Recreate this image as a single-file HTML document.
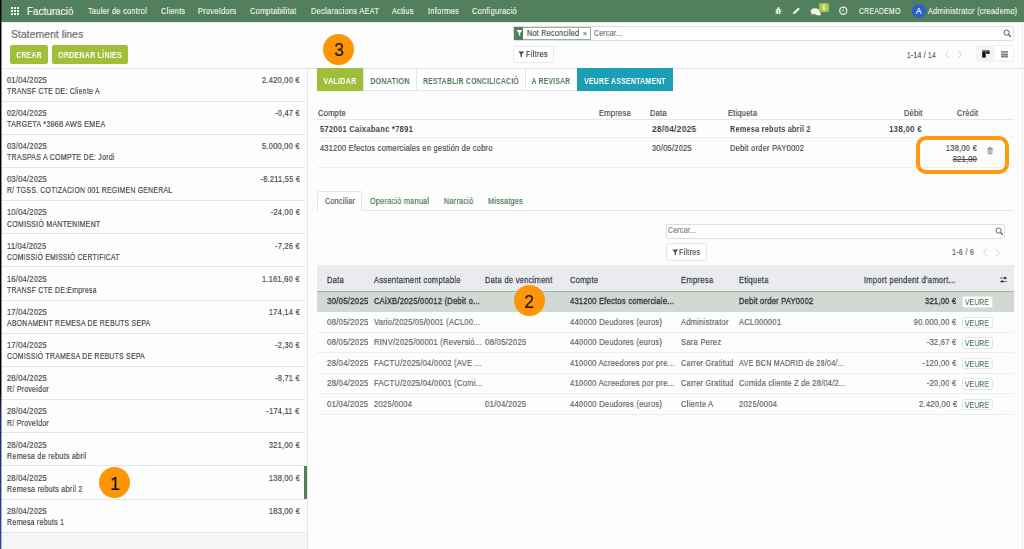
<!DOCTYPE html>
<html><head><meta charset="utf-8"><title>Statement lines</title>
<style>
html,body{margin:0;padding:0;width:1024px;height:549px;overflow:hidden;background:#fdfdfd;font-family:'Liberation Sans', sans-serif;}
.t{position:absolute;white-space:nowrap;line-height:normal;font-family:'Liberation Sans', sans-serif;will-change:transform;-webkit-text-stroke:0.2px currentColor;}
.r{position:absolute;}
</style></head><body>
<div class="r" style="left:0.00px;top:0.00px;width:1024.00px;height:22.00px;background:#53805c"></div>
<div class="r" style="left:0.00px;top:22.00px;width:1024.00px;height:1.00px;background:#e9efe9"></div>
<div class="r" style="left:11.00px;top:7.00px;width:2.20px;height:2.20px;background:#f2f5f2"></div>
<div class="r" style="left:11.00px;top:10.00px;width:2.20px;height:2.20px;background:#f2f5f2"></div>
<div class="r" style="left:11.00px;top:13.00px;width:2.20px;height:2.20px;background:#f2f5f2"></div>
<div class="r" style="left:14.00px;top:7.00px;width:2.20px;height:2.20px;background:#f2f5f2"></div>
<div class="r" style="left:14.00px;top:10.00px;width:2.20px;height:2.20px;background:#f2f5f2"></div>
<div class="r" style="left:14.00px;top:13.00px;width:2.20px;height:2.20px;background:#f2f5f2"></div>
<div class="r" style="left:17.00px;top:7.00px;width:2.20px;height:2.20px;background:#f2f5f2"></div>
<div class="r" style="left:17.00px;top:10.00px;width:2.20px;height:2.20px;background:#f2f5f2"></div>
<div class="r" style="left:17.00px;top:13.00px;width:2.20px;height:2.20px;background:#f2f5f2"></div>
<div class="t" style="left:27.30px;top:5.05px;font-size:10.8px;color:#f4f6f4;font-weight:normal;transform:scaleX(0.9223);transform-origin:left center;">Facturació</div>
<div class="t" style="left:88.00px;top:6.06px;font-size:8.64px;color:#eef2ee;font-weight:normal;letter-spacing:0.3px;transform:scaleX(0.8575);transform-origin:left center;">Tauler de control</div>
<div class="t" style="left:160.50px;top:6.06px;font-size:8.64px;color:#eef2ee;font-weight:normal;letter-spacing:0.3px;transform:scaleX(0.8577);transform-origin:left center;">Clients</div>
<div class="t" style="left:198.30px;top:6.06px;font-size:8.64px;color:#eef2ee;font-weight:normal;letter-spacing:0.3px;transform:scaleX(0.8639);transform-origin:left center;">Proveïdors</div>
<div class="t" style="left:249.80px;top:6.06px;font-size:8.64px;color:#eef2ee;font-weight:normal;letter-spacing:0.3px;transform:scaleX(0.8594);transform-origin:left center;">Comptabilitat</div>
<div class="t" style="left:311.30px;top:6.06px;font-size:8.64px;color:#eef2ee;font-weight:normal;letter-spacing:0.3px;transform:scaleX(0.8661);transform-origin:left center;">Declaracions AEAT</div>
<div class="t" style="left:391.70px;top:6.06px;font-size:8.64px;color:#eef2ee;font-weight:normal;letter-spacing:0.3px;transform:scaleX(0.8601);transform-origin:left center;">Actius</div>
<div class="t" style="left:427.50px;top:6.06px;font-size:8.64px;color:#eef2ee;font-weight:normal;letter-spacing:0.3px;transform:scaleX(0.8642);transform-origin:left center;">Informes</div>
<div class="t" style="left:472.40px;top:6.06px;font-size:8.64px;color:#eef2ee;font-weight:normal;letter-spacing:0.3px;transform:scaleX(0.8620);transform-origin:left center;">Configuració</div>
<div class="t" style="left:858.80px;top:6.20px;font-size:8.424px;color:#eef2ee;font-weight:normal;letter-spacing:0.3px;transform:scaleX(0.8164);transform-origin:left center;">CREADEMO</div>
<div class="r" style="left:912px;top:3.7px;width:14px;height:14px;border-radius:50%;background:#2f5fc8"></div>
<div class="t" style="left:718.90px;width:400px;text-align:center;top:5.86px;font-size:9.18px;color:#ffffff;font-weight:normal;letter-spacing:0.3px;transform:scaleX(0.8827);transform-origin:center center;">A</div>
<div class="t" style="left:927.80px;top:6.06px;font-size:8.64px;color:#eef2ee;font-weight:normal;letter-spacing:0.3px;transform:scaleX(0.8561);transform-origin:left center;">Administrator (creademo)</div>
<svg class="r" style="left:770px;top:4px" width="80" height="16" viewBox="0 0 80 16">
<g fill="#eef2ee">
<ellipse cx="8.4" cy="7.4" rx="2.3" ry="2.6"/><ellipse cx="8.4" cy="4.3" rx="1.3" ry="1.1"/>
<rect x="5.3" y="5.6" width="6.2" height="0.5"/><rect x="5.2" y="7.5" width="6.4" height="0.5"/><rect x="5.5" y="9.3" width="5.8" height="0.5"/>
</g><rect x="8.15" y="5.4" width="0.5" height="4.6" fill="#53805c"/><g>
</g>
<path d="M22.8 10.2 L23.5 8.2 L28.3 3.4 L29.8 4.9 L25 9.7 Z" fill="#eef2ee"/>
<path d="M45 4.3 c-2.6 0 -4.3 1.3 -4.3 3 c0 0.9 0.5 1.6 1.2 2.1 l-0.6 1.6 l2.1 -1 c0.5 0.1 1 0.2 1.6 0.2 c2.6 0 4.3 -1.3 4.3 -3 c0 -1.7 -1.7 -2.9 -4.3 -2.9z" fill="#eef2ee"/>
<path d="M48.5 7.3 c1.5 0.3 2.3 1.1 2.3 2.1 c0 0.5 -0.3 1 -0.7 1.3 l0.4 1.2 l-1.5 -0.7 c-0.3 0.1 -0.6 0.1 -0.9 0.1 c-1.2 0 -2.2 -0.4 -2.7 -1" fill="#eef2ee"/>
<circle cx="73.3" cy="6.7" r="3.6" fill="none" stroke="#eef2ee" stroke-width="1.2"/>
<path d="M73.3 4.8 V6.9 H71.9" fill="none" stroke="#eef2ee" stroke-width="0.9"/>
</svg>
<div class="r" style="left:819.2px;top:3.2px;width:9.7px;height:9.3px;border-radius:2px;background:#aac74c"></div>
<div class="t" style="left:624.10px;width:400px;text-align:center;top:4.07px;font-size:7.02px;color:#f4f8ea;font-weight:normal;letter-spacing:0.3px;transform:scaleX(0.8598);transform-origin:center center;">6</div>
<div class="t" style="left:10.60px;top:27.75px;font-size:11.34px;color:#666a6e;font-weight:normal;transform:scaleX(0.9259);transform-origin:left center;">Statement lines</div>
<div class="r" style="left:10.30px;top:45.00px;width:37.70px;height:19.00px;background:#a1be3a;border-radius:2px"></div>
<div class="t" style="left:-170.60px;width:400px;text-align:center;top:49.98px;font-size:8.532px;color:#ffffff;font-weight:bold;letter-spacing:0.3px;transform:scaleX(0.8009);transform-origin:center center;-webkit-text-stroke:0;">CREAR</div>
<div class="r" style="left:52.00px;top:45.00px;width:76.00px;height:19.00px;background:#a1be3a;border-radius:2px"></div>
<div class="t" style="left:-110.10px;width:400px;text-align:center;top:49.98px;font-size:8.532px;color:#ffffff;font-weight:bold;letter-spacing:0.3px;transform:scaleX(0.8290);transform-origin:center center;-webkit-text-stroke:0;">ORDENAR LÍNIES</div>
<div class="r" style="left:512.60px;top:26.20px;width:501.10px;height:15.10px;border:1px solid #dcdfe2;border-radius:2px;box-sizing:border-box;background:#fff"></div>
<div class="r" style="left:513.90px;top:27.00px;width:77.10px;height:12.60px;border:1px solid #93b399;box-sizing:border-box;background:#fff"></div>
<div class="r" style="left:513.90px;top:27.00px;width:9.50px;height:12.60px;background:#53805c"></div>
<svg class="r" style="left:515.5px;top:29px" width="7" height="8" viewBox="0 0 7 8"><path d="M0.5 1 H6.5 L4.2 4 V7 L2.8 6 V4 Z" fill="#fff"/></svg>
<div class="t" style="left:526.80px;top:29.34px;font-size:8.208px;color:#4a4f55;font-weight:normal;letter-spacing:0.3px;transform:scaleX(0.8771);transform-origin:left center;">Not Reconciled</div>
<div class="t" style="left:385.30px;width:400px;text-align:center;top:29.46px;font-size:8.1px;color:#666;font-weight:normal;letter-spacing:0.3px;transform:scaleX(0.8707);transform-origin:center center;">×</div>
<div class="t" style="left:593.90px;top:29.04px;font-size:8.208px;color:#6f7377;font-weight:normal;letter-spacing:0.3px;transform:scaleX(0.8518);transform-origin:left center;">Cercar...</div>
<svg class="r" style="left:1003px;top:29px" width="9" height="9" viewBox="0 0 9 9"><circle cx="3.6" cy="3.6" r="2.6" fill="none" stroke="#4a4f55" stroke-width="0.9"/><path d="M5.5 5.5 L7.8 7.8" stroke="#4a4f55" stroke-width="1.1"/></svg>
<div class="r" style="left:512.60px;top:45.50px;width:41.00px;height:17.10px;border:1px solid #e6e8ea;border-radius:2px;box-sizing:border-box;background:#fff"></div>
<svg class="r" style="left:518px;top:51.3px" width="7" height="7" viewBox="0 0 7 7"><path d="M0.3 0.5 H6.2 L4 3.2 V6.5 L2.5 5.6 V3.2 Z" fill="#4a4f55"/></svg>
<div class="t" style="left:526.10px;top:49.30px;font-size:8.424px;color:#3f4449;font-weight:normal;letter-spacing:0.3px;transform:scaleX(0.8749);transform-origin:left center;">Filtres</div>
<div class="t" style="left:907.30px;top:49.50px;font-size:8.424px;color:#555a5e;font-weight:normal;letter-spacing:0.3px;transform:scaleX(0.8067);transform-origin:left center;">1-14 / 14</div>
<svg class="r" style="left:944px;top:50px" width="20" height="9" viewBox="0 0 20 9"><path d="M5 0.8 L1.5 4.5 L5 8.2" fill="none" stroke="#c8cbce" stroke-width="0.9"/><path d="M14 0.8 L17.5 4.5 L14 8.2" fill="none" stroke="#c8cbce" stroke-width="0.9"/></svg>
<div class="r" style="left:976.30px;top:45.40px;width:37.50px;height:17.00px;border:1px solid #eceef0;border-radius:2px;box-sizing:border-box;background:#fff"></div>
<div class="r" style="left:976.30px;top:45.40px;width:18.70px;height:17.00px;background:#f3f4f5"></div>
<svg class="r" style="left:982px;top:50px" width="8" height="8" viewBox="0 0 8 8"><rect x="0.2" y="0.2" width="7.4" height="1.3" fill="#555"/><rect x="0.2" y="1.5" width="3.5" height="6.1" fill="#111"/><rect x="4.3" y="1.4" width="3.3" height="2.4" fill="#111"/></svg>
<svg class="r" style="left:1001px;top:50.5px" width="8" height="8" viewBox="0 0 8 8"><rect x="0" y="0.3" width="7" height="1.2" fill="#55595d"/><rect x="0" y="2.5" width="7" height="1.9" fill="#7d8185"/><rect x="0" y="4.6" width="7" height="1.9" fill="#7d8185"/></svg>
<div class="r" style="left:0.00px;top:67.90px;width:1024.00px;height:1.00px;background:#e3e6e9"></div>
<div class="r" style="left:1.00px;top:532.78px;width:306.00px;height:16.22px;background:#f4f5f5"></div>
<div class="r" style="left:1.00px;top:100.57px;width:304.00px;height:1.00px;background:#e3e6e9"></div>
<div class="t" style="left:6.80px;top:74.66px;font-size:8.64px;color:#45494d;font-weight:normal;letter-spacing:0.3px;transform:scaleX(0.8659);transform-origin:left center;">01/04/2025</div>
<div class="t" style="left:7.00px;top:85.96px;font-size:8.64px;color:#45494d;font-weight:normal;letter-spacing:0.3px;transform:scaleX(0.8071);transform-origin:left center;">TRANSF CTE DE: Cliente A</div>
<div class="t" style="right:724.00px;top:74.66px;font-size:8.64px;color:#45494d;font-weight:normal;letter-spacing:0.3px;transform:scaleX(0.8626);transform-origin:right center;">2.420,00 €</div>
<div class="r" style="left:1.00px;top:133.74px;width:304.00px;height:1.00px;background:#e3e6e9"></div>
<div class="t" style="left:6.80px;top:107.83px;font-size:8.64px;color:#45494d;font-weight:normal;letter-spacing:0.3px;transform:scaleX(0.8659);transform-origin:left center;">02/04/2025</div>
<div class="t" style="left:7.00px;top:119.13px;font-size:8.64px;color:#45494d;font-weight:normal;letter-spacing:0.3px;transform:scaleX(0.8308);transform-origin:left center;">TARGETA *3968 AWS EMEA</div>
<div class="t" style="right:724.00px;top:107.83px;font-size:8.64px;color:#45494d;font-weight:normal;letter-spacing:0.3px;transform:scaleX(0.8589);transform-origin:right center;">-0,47 €</div>
<div class="r" style="left:1.00px;top:166.91px;width:304.00px;height:1.00px;background:#e3e6e9"></div>
<div class="t" style="left:6.80px;top:141.00px;font-size:8.64px;color:#45494d;font-weight:normal;letter-spacing:0.3px;transform:scaleX(0.8659);transform-origin:left center;">03/04/2025</div>
<div class="t" style="left:7.00px;top:152.30px;font-size:8.64px;color:#45494d;font-weight:normal;letter-spacing:0.3px;transform:scaleX(0.8182);transform-origin:left center;">TRASPAS A COMPTE DE: Jordi</div>
<div class="t" style="right:724.00px;top:141.00px;font-size:8.64px;color:#45494d;font-weight:normal;letter-spacing:0.3px;transform:scaleX(0.8626);transform-origin:right center;">5.000,00 €</div>
<div class="r" style="left:1.00px;top:200.08px;width:304.00px;height:1.00px;background:#e3e6e9"></div>
<div class="t" style="left:6.80px;top:174.17px;font-size:8.64px;color:#45494d;font-weight:normal;letter-spacing:0.3px;transform:scaleX(0.8659);transform-origin:left center;">03/04/2025</div>
<div class="t" style="left:7.00px;top:185.47px;font-size:8.64px;color:#45494d;font-weight:normal;letter-spacing:0.3px;transform:scaleX(0.7984);transform-origin:left center;">R/ TGSS. COTIZACION 001 REGIMEN GENERAL</div>
<div class="t" style="right:724.00px;top:174.17px;font-size:8.64px;color:#45494d;font-weight:normal;letter-spacing:0.3px;transform:scaleX(0.8600);transform-origin:right center;">-8.211,55 €</div>
<div class="r" style="left:1.00px;top:233.25px;width:304.00px;height:1.00px;background:#e3e6e9"></div>
<div class="t" style="left:6.80px;top:207.34px;font-size:8.64px;color:#45494d;font-weight:normal;letter-spacing:0.3px;transform:scaleX(0.8659);transform-origin:left center;">10/04/2025</div>
<div class="t" style="left:7.00px;top:218.64px;font-size:8.64px;color:#45494d;font-weight:normal;letter-spacing:0.3px;transform:scaleX(0.8142);transform-origin:left center;">COMISSIÓ MANTENIMENT</div>
<div class="t" style="right:724.00px;top:207.34px;font-size:8.64px;color:#45494d;font-weight:normal;letter-spacing:0.3px;transform:scaleX(0.8608);transform-origin:right center;">-24,00 €</div>
<div class="r" style="left:1.00px;top:266.42px;width:304.00px;height:1.00px;background:#e3e6e9"></div>
<div class="t" style="left:6.80px;top:240.51px;font-size:8.64px;color:#45494d;font-weight:normal;letter-spacing:0.3px;transform:scaleX(0.8650);transform-origin:left center;">11/04/2025</div>
<div class="t" style="left:7.00px;top:251.81px;font-size:8.64px;color:#45494d;font-weight:normal;letter-spacing:0.3px;transform:scaleX(0.7933);transform-origin:left center;">COMISSIÓ EMISSIÓ CERTIFICAT</div>
<div class="t" style="right:724.00px;top:240.51px;font-size:8.64px;color:#45494d;font-weight:normal;letter-spacing:0.3px;transform:scaleX(0.8589);transform-origin:right center;">-7,26 €</div>
<div class="r" style="left:1.00px;top:299.59px;width:304.00px;height:1.00px;background:#e3e6e9"></div>
<div class="t" style="left:6.80px;top:273.68px;font-size:8.64px;color:#45494d;font-weight:normal;letter-spacing:0.3px;transform:scaleX(0.8659);transform-origin:left center;">16/04/2025</div>
<div class="t" style="left:7.00px;top:284.98px;font-size:8.64px;color:#45494d;font-weight:normal;letter-spacing:0.3px;transform:scaleX(0.8033);transform-origin:left center;">TRANSF CTE DE:Empresa</div>
<div class="t" style="right:724.00px;top:273.68px;font-size:8.64px;color:#45494d;font-weight:normal;letter-spacing:0.3px;transform:scaleX(0.8626);transform-origin:right center;">1.161,60 €</div>
<div class="r" style="left:1.00px;top:332.76px;width:304.00px;height:1.00px;background:#e3e6e9"></div>
<div class="t" style="left:6.80px;top:306.85px;font-size:8.64px;color:#45494d;font-weight:normal;letter-spacing:0.3px;transform:scaleX(0.8659);transform-origin:left center;">17/04/2025</div>
<div class="t" style="left:7.00px;top:318.15px;font-size:8.64px;color:#45494d;font-weight:normal;letter-spacing:0.3px;transform:scaleX(0.8036);transform-origin:left center;">ABONAMENT REMESA DE REBUTS SEPA</div>
<div class="t" style="right:724.00px;top:306.85px;font-size:8.64px;color:#45494d;font-weight:normal;letter-spacing:0.3px;transform:scaleX(0.8642);transform-origin:right center;">174,14 €</div>
<div class="r" style="left:1.00px;top:365.93px;width:304.00px;height:1.00px;background:#e3e6e9"></div>
<div class="t" style="left:6.80px;top:340.02px;font-size:8.64px;color:#45494d;font-weight:normal;letter-spacing:0.3px;transform:scaleX(0.8659);transform-origin:left center;">17/04/2025</div>
<div class="t" style="left:7.00px;top:351.32px;font-size:8.64px;color:#45494d;font-weight:normal;letter-spacing:0.3px;transform:scaleX(0.8002);transform-origin:left center;">COMISSIÓ TRAMESA DE REBUTS SEPA</div>
<div class="t" style="right:724.00px;top:340.02px;font-size:8.64px;color:#45494d;font-weight:normal;letter-spacing:0.3px;transform:scaleX(0.8589);transform-origin:right center;">-2,30 €</div>
<div class="r" style="left:1.00px;top:399.10px;width:304.00px;height:1.00px;background:#e3e6e9"></div>
<div class="t" style="left:6.80px;top:373.19px;font-size:8.64px;color:#45494d;font-weight:normal;letter-spacing:0.3px;transform:scaleX(0.8659);transform-origin:left center;">28/04/2025</div>
<div class="t" style="left:7.00px;top:384.49px;font-size:8.64px;color:#45494d;font-weight:normal;letter-spacing:0.3px;transform:scaleX(0.8156);transform-origin:left center;">R/ Proveidor</div>
<div class="t" style="right:724.00px;top:373.19px;font-size:8.64px;color:#45494d;font-weight:normal;letter-spacing:0.3px;transform:scaleX(0.8589);transform-origin:right center;">-8,71 €</div>
<div class="r" style="left:1.00px;top:432.27px;width:304.00px;height:1.00px;background:#e3e6e9"></div>
<div class="t" style="left:6.80px;top:406.36px;font-size:8.64px;color:#45494d;font-weight:normal;letter-spacing:0.3px;transform:scaleX(0.8659);transform-origin:left center;">28/04/2025</div>
<div class="t" style="left:7.00px;top:417.66px;font-size:8.64px;color:#45494d;font-weight:normal;letter-spacing:0.3px;transform:scaleX(0.8081);transform-origin:left center;">R/ Proveïdor</div>
<div class="t" style="right:724.00px;top:406.36px;font-size:8.64px;color:#45494d;font-weight:normal;letter-spacing:0.3px;transform:scaleX(0.8611);transform-origin:right center;">-174,11 €</div>
<div class="r" style="left:1.00px;top:465.44px;width:304.00px;height:1.00px;background:#e3e6e9"></div>
<div class="t" style="left:6.80px;top:439.53px;font-size:8.64px;color:#45494d;font-weight:normal;letter-spacing:0.3px;transform:scaleX(0.8659);transform-origin:left center;">28/04/2025</div>
<div class="t" style="left:7.00px;top:450.83px;font-size:8.64px;color:#45494d;font-weight:normal;letter-spacing:0.3px;transform:scaleX(0.8330);transform-origin:left center;">Remesa de rebuts abril</div>
<div class="t" style="right:724.00px;top:439.53px;font-size:8.64px;color:#45494d;font-weight:normal;letter-spacing:0.3px;transform:scaleX(0.8642);transform-origin:right center;">321,00 €</div>
<div class="r" style="left:1.00px;top:498.61px;width:304.00px;height:1.00px;background:#e3e6e9"></div>
<div class="t" style="left:6.80px;top:472.70px;font-size:8.64px;color:#45494d;font-weight:normal;letter-spacing:0.3px;transform:scaleX(0.8659);transform-origin:left center;">28/04/2025</div>
<div class="t" style="left:7.00px;top:484.00px;font-size:8.64px;color:#45494d;font-weight:normal;letter-spacing:0.3px;transform:scaleX(0.8347);transform-origin:left center;">Remesa rebuts abril 2</div>
<div class="t" style="right:724.00px;top:472.70px;font-size:8.64px;color:#45494d;font-weight:normal;letter-spacing:0.3px;transform:scaleX(0.8642);transform-origin:right center;">138,00 €</div>
<div class="r" style="left:304.30px;top:466.44px;width:2.70px;height:32.67px;background:#53805c"></div>
<div class="r" style="left:1.00px;top:531.78px;width:304.00px;height:1.00px;background:#e3e6e9"></div>
<div class="t" style="left:6.80px;top:505.87px;font-size:8.64px;color:#45494d;font-weight:normal;letter-spacing:0.3px;transform:scaleX(0.8659);transform-origin:left center;">28/04/2025</div>
<div class="t" style="left:7.00px;top:517.17px;font-size:8.64px;color:#45494d;font-weight:normal;letter-spacing:0.3px;transform:scaleX(0.8167);transform-origin:left center;">Remesa rebuts 1</div>
<div class="t" style="right:724.00px;top:505.87px;font-size:8.64px;color:#45494d;font-weight:normal;letter-spacing:0.3px;transform:scaleX(0.8642);transform-origin:right center;">183,00 €</div>
<div class="r" style="left:307.00px;top:68.90px;width:1.00px;height:480.10px;background:#e3e6e9"></div>
<div class="r" style="left:316.90px;top:68.40px;width:46.40px;height:23.10px;background:#a1be3a"></div>
<div class="t" style="left:140.40px;width:400px;text-align:center;top:76.18px;font-size:8.532px;color:#ffffff;font-weight:bold;letter-spacing:0.3px;transform:scaleX(0.8379);transform-origin:center center;-webkit-text-stroke:0;">VALIDAR</div>
<div class="r" style="left:363.30px;top:68.40px;width:53.50px;height:23.10px;border:1px solid #e3e6e9;box-sizing:border-box;background:#fff"></div>
<div class="t" style="left:189.65px;width:400px;text-align:center;top:76.18px;font-size:8.532px;color:#4e7a57;font-weight:bold;letter-spacing:0.3px;transform:scaleX(0.8378);transform-origin:center center;-webkit-text-stroke:0;">DONATION</div>
<div class="r" style="left:416.00px;top:68.40px;width:109.80px;height:23.10px;border:1px solid #e3e6e9;box-sizing:border-box;background:#fff"></div>
<div class="t" style="left:270.50px;width:400px;text-align:center;top:76.18px;font-size:8.532px;color:#4e7a57;font-weight:bold;letter-spacing:0.3px;transform:scaleX(0.8027);transform-origin:center center;-webkit-text-stroke:0;">RESTABLIR CONCILICACIÓ</div>
<div class="r" style="left:525.00px;top:68.40px;width:53.10px;height:23.10px;border:1px solid #e3e6e9;box-sizing:border-box;background:#fff"></div>
<div class="t" style="left:351.15px;width:400px;text-align:center;top:76.18px;font-size:8.532px;color:#4e7a57;font-weight:bold;letter-spacing:0.3px;transform:scaleX(0.7903);transform-origin:center center;-webkit-text-stroke:0;">A REVISAR</div>
<div class="r" style="left:577.30px;top:68.40px;width:95.70px;height:23.10px;background:#1b9fb4"></div>
<div class="t" style="left:425.10px;width:400px;text-align:center;top:76.18px;font-size:8.532px;color:#ffffff;font-weight:bold;letter-spacing:0.3px;transform:scaleX(0.8120);transform-origin:center center;-webkit-text-stroke:0;">VEURE ASSENTAMENT</div>
<div class="t" style="left:317.80px;top:107.76px;font-size:8.64px;color:#45494d;font-weight:normal;letter-spacing:0.3px;transform:scaleX(0.8739);transform-origin:left center;">Compte</div>
<div class="t" style="left:598.50px;top:107.76px;font-size:8.64px;color:#45494d;font-weight:normal;letter-spacing:0.3px;transform:scaleX(0.8729);transform-origin:left center;">Empresa</div>
<div class="t" style="left:650.00px;top:107.76px;font-size:8.64px;color:#45494d;font-weight:normal;letter-spacing:0.3px;transform:scaleX(0.8688);transform-origin:left center;">Data</div>
<div class="t" style="left:728.40px;top:107.76px;font-size:8.64px;color:#45494d;font-weight:normal;letter-spacing:0.3px;transform:scaleX(0.8608);transform-origin:left center;">Etiqueta</div>
<div class="t" style="right:101.00px;top:107.76px;font-size:8.64px;color:#45494d;font-weight:normal;letter-spacing:0.3px;transform:scaleX(0.8618);transform-origin:right center;">Dèbit</div>
<div class="t" style="left:957.00px;top:107.76px;font-size:8.64px;color:#45494d;font-weight:normal;letter-spacing:0.3px;transform:scaleX(0.8588);transform-origin:left center;">Crèdit</div>
<div class="r" style="left:317.00px;top:118.50px;width:697.00px;height:1.00px;background:#e3e6e9"></div>
<div class="t" style="left:319.70px;top:124.16px;font-size:8.64px;color:#3a3f44;font-weight:bold;letter-spacing:0.3px;transform:scaleX(0.8800);transform-origin:left center;-webkit-text-stroke:0;">572001 Caixabanc *7891</div>
<div class="t" style="left:651.90px;top:124.16px;font-size:8.64px;color:#3a3f44;font-weight:bold;letter-spacing:0.3px;transform:scaleX(0.9624);transform-origin:left center;-webkit-text-stroke:0;">28/04/2025</div>
<div class="t" style="left:729.80px;top:124.16px;font-size:8.64px;color:#3a3f44;font-weight:bold;letter-spacing:0.3px;transform:scaleX(0.8429);transform-origin:left center;-webkit-text-stroke:0;">Remesa rebuts abril 2</div>
<div class="t" style="right:102.30px;top:124.16px;font-size:8.64px;color:#3a3f44;font-weight:bold;letter-spacing:0.3px;transform:scaleX(0.9159);transform-origin:right center;-webkit-text-stroke:0;">138,00 €</div>
<div class="r" style="left:317.00px;top:137.00px;width:697.00px;height:1.00px;background:#eef0f2"></div>
<div class="t" style="left:319.50px;top:142.86px;font-size:8.64px;color:#45494d;font-weight:normal;letter-spacing:0.3px;transform:scaleX(0.8622);transform-origin:left center;">431200 Efectos comerciales en gestión de cobro</div>
<div class="t" style="left:651.90px;top:142.86px;font-size:8.64px;color:#45494d;font-weight:normal;letter-spacing:0.3px;transform:scaleX(0.8659);transform-origin:left center;">30/05/2025</div>
<div class="t" style="left:729.80px;top:142.86px;font-size:8.64px;color:#45494d;font-weight:normal;letter-spacing:0.3px;transform:scaleX(0.8646);transform-origin:left center;">Debit order PAY0002</div>
<div class="t" style="right:46.70px;top:142.86px;font-size:8.64px;color:#45494d;font-weight:normal;letter-spacing:0.3px;transform:scaleX(0.8642);transform-origin:right center;">138,00 €</div>
<div class="t" style="right:46.70px;top:154.36px;font-size:8.64px;color:#45494d;font-weight:normal;text-decoration:line-through;letter-spacing:0.3px;transform:scaleX(0.8669);transform-origin:right center;">321,00</div>
<svg class="r" style="left:987.3px;top:147.2px" width="7" height="8" viewBox="0 0 7 8"><rect x="0.2" y="1.1" width="5.8" height="0.7" fill="#6a6e72"/><rect x="2.1" y="0.2" width="2" height="0.9" fill="#6a6e72"/><path d="M1.1 2.3 H5.1 L4.8 6.8 H1.4 Z" fill="none" stroke="#6a6e72" stroke-width="0.7"/><rect x="2.4" y="3" width="0.5" height="3" fill="#6a6e72"/><rect x="3.4" y="3" width="0.5" height="3" fill="#6a6e72"/></svg>
<div class="r" style="left:317.00px;top:167.00px;width:697.00px;height:1.00px;background:#eef0f2"></div>
<div class="r" style="left:916.4px;top:135.6px;width:92.6px;height:38.9px;border:4px solid #fd9a0e;border-radius:10px;box-sizing:border-box"></div>
<div class="r" style="left:317.00px;top:210.00px;width:697.00px;height:1.00px;background:#e3e6e9"></div>
<div class="r" style="left:317.2px;top:191.2px;width:45.2px;height:19.8px;border:1px solid #e3e6e9;border-bottom:none;border-radius:2px 2px 0 0;box-sizing:border-box;background:#fff"></div>
<div class="t" style="left:325.00px;top:196.00px;font-size:8.424px;color:#555a5e;font-weight:normal;letter-spacing:0.3px;transform:scaleX(0.8554);transform-origin:left center;">Conciliar</div>
<div class="t" style="left:370.00px;top:196.00px;font-size:8.424px;color:#4e7a57;font-weight:normal;letter-spacing:0.3px;transform:scaleX(0.8652);transform-origin:left center;">Operació manual</div>
<div class="t" style="left:444.30px;top:196.00px;font-size:8.424px;color:#4e7a57;font-weight:normal;letter-spacing:0.3px;transform:scaleX(0.8610);transform-origin:left center;">Narració</div>
<div class="t" style="left:488.40px;top:196.00px;font-size:8.424px;color:#4e7a57;font-weight:normal;letter-spacing:0.3px;transform:scaleX(0.8644);transform-origin:left center;">Missatges</div>
<div class="r" style="left:665.50px;top:223.50px;width:339.00px;height:15.20px;border:1px solid #dcdfe2;border-radius:2px;box-sizing:border-box;background:#fff"></div>
<div class="t" style="left:667.70px;top:225.94px;font-size:8.208px;color:#7a7e82;font-weight:normal;letter-spacing:0.3px;transform:scaleX(0.8518);transform-origin:left center;">Cercar...</div>
<svg class="r" style="left:995px;top:226.6px" width="9" height="9" viewBox="0 0 9 9"><circle cx="3.6" cy="3.6" r="2.6" fill="none" stroke="#4a4f55" stroke-width="0.9"/><path d="M5.5 5.5 L7.8 7.8" stroke="#4a4f55" stroke-width="1.1"/></svg>
<div class="r" style="left:665.50px;top:243.00px;width:41.30px;height:17.50px;border:1px solid #e6e8ea;border-radius:2px;box-sizing:border-box;background:#fff"></div>
<svg class="r" style="left:671.5px;top:249px" width="7" height="7" viewBox="0 0 7 7"><path d="M0.3 0.5 H6.2 L4 3.2 V6.5 L2.5 5.6 V3.2 Z" fill="#4a4f55"/></svg>
<div class="t" style="left:679.40px;top:247.40px;font-size:8.424px;color:#4a4f55;font-weight:normal;letter-spacing:0.3px;transform:scaleX(0.8482);transform-origin:left center;">Filtres</div>
<div class="t" style="left:951.80px;top:247.40px;font-size:8.424px;color:#555a5e;font-weight:normal;letter-spacing:0.3px;transform:scaleX(0.8511);transform-origin:left center;">1-6 / 6</div>
<svg class="r" style="left:982px;top:248px" width="20" height="9" viewBox="0 0 20 9"><path d="M5 0.8 L1.5 4.5 L5 8.2" fill="none" stroke="#c8cbce" stroke-width="0.9"/><path d="M14 0.8 L17.5 4.5 L14 8.2" fill="none" stroke="#c8cbce" stroke-width="0.9"/></svg>
<div class="r" style="left:317.00px;top:265.20px;width:697.00px;height:26.10px;background:#e9ebef"></div>
<div class="r" style="left:317.00px;top:290.70px;width:697.00px;height:1.20px;background:#9bb7a0"></div>
<div class="t" style="left:326.70px;top:274.54px;font-size:8.748px;color:#3f444a;font-weight:normal;-webkit-text-stroke:0.28px #3f444a;letter-spacing:0.3px;transform:scaleX(0.8695);transform-origin:left center;">Data</div>
<div class="t" style="left:373.60px;top:274.54px;font-size:8.748px;color:#3f444a;font-weight:normal;-webkit-text-stroke:0.28px #3f444a;letter-spacing:0.3px;transform:scaleX(0.8677);transform-origin:left center;">Assentament comptable</div>
<div class="t" style="left:484.70px;top:274.54px;font-size:8.748px;color:#3f444a;font-weight:normal;-webkit-text-stroke:0.28px #3f444a;letter-spacing:0.3px;transform:scaleX(0.8654);transform-origin:left center;">Data de venciment</div>
<div class="t" style="left:570.00px;top:274.54px;font-size:8.748px;color:#3f444a;font-weight:normal;-webkit-text-stroke:0.28px #3f444a;letter-spacing:0.3px;transform:scaleX(0.8745);transform-origin:left center;">Compte</div>
<div class="t" style="left:681.30px;top:274.54px;font-size:8.748px;color:#3f444a;font-weight:normal;-webkit-text-stroke:0.28px #3f444a;letter-spacing:0.3px;transform:scaleX(0.8735);transform-origin:left center;">Empresa</div>
<div class="t" style="left:739.00px;top:274.54px;font-size:8.748px;color:#3f444a;font-weight:normal;-webkit-text-stroke:0.28px #3f444a;letter-spacing:0.3px;transform:scaleX(0.8615);transform-origin:left center;">Etiqueta</div>
<div class="t" style="right:68.10px;top:274.51px;font-size:8.921px;color:#3f444a;font-weight:normal;-webkit-text-stroke:0.28px #3f444a;letter-spacing:0.3px;transform:scaleX(0.8610);transform-origin:right center;">Import pendent d'amort...</div>
<svg class="r" style="left:998.5px;top:275.5px" width="9" height="8" viewBox="0 0 9 8"><rect x="0.8" y="1.7" width="7.2" height="0.7" fill="#3a3e42"/><rect x="0.8" y="5.2" width="7.2" height="0.7" fill="#3a3e42"/><circle cx="6" cy="2.05" r="1.2" fill="#3a3e42"/><circle cx="3.2" cy="5.55" r="1.2" fill="#3a3e42"/></svg>
<div class="r" style="left:317.00px;top:291.80px;width:697.00px;height:20.00px;background:#d2d9d3"></div>
<div class="t" style="left:326.70px;top:296.44px;font-size:8.748px;color:#2f3337;font-weight:normal;-webkit-text-stroke:0.35px #2f3337;letter-spacing:0.3px;transform:scaleX(0.8914);transform-origin:left center;">30/05/2025</div>
<div class="t" style="left:373.60px;top:296.44px;font-size:8.748px;color:#2f3337;font-weight:normal;-webkit-text-stroke:0.35px #2f3337;letter-spacing:0.3px;transform:scaleX(0.8628);transform-origin:left center;">CAiXB/2025/00012 (Debit o...</div>
<div class="t" style="left:570.00px;top:296.44px;font-size:8.748px;color:#2f3337;font-weight:normal;-webkit-text-stroke:0.35px #2f3337;letter-spacing:0.3px;transform:scaleX(0.8618);transform-origin:left center;">431200 Efectos comerciale...</div>
<div class="t" style="left:739.00px;top:296.44px;font-size:8.748px;color:#2f3337;font-weight:normal;-webkit-text-stroke:0.35px #2f3337;letter-spacing:0.3px;transform:scaleX(0.8557);transform-origin:left center;">Debit order PAY0002</div>
<div class="t" style="right:67.20px;top:296.44px;font-size:8.748px;color:#2f3337;font-weight:normal;-webkit-text-stroke:0.35px #2f3337;letter-spacing:0.3px;transform:scaleX(0.8650);transform-origin:right center;">321,00 €</div>
<div class="r" style="left:961.80px;top:296.00px;width:30.90px;height:11.60px;border:1px solid #e3e6e9;border-radius:2px;box-sizing:border-box;background:#fff"></div>
<div class="t" style="left:777.20px;width:400px;text-align:center;top:297.42px;font-size:8.856px;color:#4e7a57;font-weight:normal;letter-spacing:0.3px;transform:scaleX(0.7622);transform-origin:center center;">VEURE</div>
<div class="r" style="left:317.00px;top:331.80px;width:697.00px;height:1.00px;background:#eceef0"></div>
<div class="t" style="left:326.70px;top:316.94px;font-size:8.748px;color:#5f6368;font-weight:normal;letter-spacing:0.3px;transform:scaleX(0.8914);transform-origin:left center;">08/05/2025</div>
<div class="t" style="left:373.60px;top:316.94px;font-size:8.748px;color:#5f6368;font-weight:normal;letter-spacing:0.3px;transform:scaleX(0.8629);transform-origin:left center;">Vario/2025/05/0001 (ACL00...</div>
<div class="t" style="left:570.00px;top:316.94px;font-size:8.748px;color:#5f6368;font-weight:normal;letter-spacing:0.3px;transform:scaleX(0.8660);transform-origin:left center;">440000 Deudores (euros)</div>
<div class="t" style="left:681.30px;top:316.94px;font-size:8.748px;color:#5f6368;font-weight:normal;letter-spacing:0.3px;transform:scaleX(0.8624);transform-origin:left center;">Administrator</div>
<div class="t" style="left:739.00px;top:316.94px;font-size:8.748px;color:#5f6368;font-weight:normal;letter-spacing:0.3px;transform:scaleX(0.8670);transform-origin:left center;">ACL000001</div>
<div class="t" style="right:67.20px;top:316.94px;font-size:8.748px;color:#5f6368;font-weight:normal;letter-spacing:0.3px;transform:scaleX(0.8642);transform-origin:right center;">90.000,00 €</div>
<div class="r" style="left:961.80px;top:316.50px;width:30.90px;height:11.60px;border:1px solid #e3e6e9;border-radius:2px;box-sizing:border-box;background:#fff"></div>
<div class="t" style="left:777.20px;width:400px;text-align:center;top:317.92px;font-size:8.856px;color:#4e7a57;font-weight:normal;letter-spacing:0.3px;transform:scaleX(0.7622);transform-origin:center center;">VEURE</div>
<div class="r" style="left:317.00px;top:352.30px;width:697.00px;height:1.00px;background:#eceef0"></div>
<div class="t" style="left:326.70px;top:337.44px;font-size:8.748px;color:#5f6368;font-weight:normal;letter-spacing:0.3px;transform:scaleX(0.8914);transform-origin:left center;">08/05/2025</div>
<div class="t" style="left:373.60px;top:337.44px;font-size:8.748px;color:#5f6368;font-weight:normal;letter-spacing:0.3px;transform:scaleX(0.8638);transform-origin:left center;">RINV/2025/00001 (Reversió...</div>
<div class="t" style="left:484.70px;top:337.44px;font-size:8.748px;color:#5f6368;font-weight:normal;letter-spacing:0.3px;transform:scaleX(0.8914);transform-origin:left center;">08/05/2025</div>
<div class="t" style="left:570.00px;top:337.44px;font-size:8.748px;color:#5f6368;font-weight:normal;letter-spacing:0.3px;transform:scaleX(0.8660);transform-origin:left center;">440000 Deudores (euros)</div>
<div class="t" style="left:681.30px;top:337.44px;font-size:8.748px;color:#5f6368;font-weight:normal;letter-spacing:0.3px;transform:scaleX(0.8665);transform-origin:left center;">Sara Perez</div>
<div class="t" style="right:67.20px;top:337.44px;font-size:8.748px;color:#5f6368;font-weight:normal;letter-spacing:0.3px;transform:scaleX(0.8615);transform-origin:right center;">-32,67 €</div>
<div class="r" style="left:961.80px;top:337.00px;width:30.90px;height:11.60px;border:1px solid #e3e6e9;border-radius:2px;box-sizing:border-box;background:#fff"></div>
<div class="t" style="left:777.20px;width:400px;text-align:center;top:338.42px;font-size:8.856px;color:#4e7a57;font-weight:normal;letter-spacing:0.3px;transform:scaleX(0.7622);transform-origin:center center;">VEURE</div>
<div class="r" style="left:317.00px;top:372.80px;width:697.00px;height:1.00px;background:#eceef0"></div>
<div class="t" style="left:326.70px;top:357.94px;font-size:8.748px;color:#5f6368;font-weight:normal;letter-spacing:0.3px;transform:scaleX(0.8914);transform-origin:left center;">28/04/2025</div>
<div class="t" style="left:373.60px;top:357.94px;font-size:8.748px;color:#5f6368;font-weight:normal;letter-spacing:0.3px;transform:scaleX(0.8657);transform-origin:left center;">FACTU/2025/04/0002 (AVE ...</div>
<div class="t" style="left:570.00px;top:357.94px;font-size:8.748px;color:#5f6368;font-weight:normal;letter-spacing:0.3px;transform:scaleX(0.8620);transform-origin:left center;">410000 Acreedores por pre...</div>
<div class="t" style="left:681.30px;top:357.94px;font-size:8.748px;color:#5f6368;font-weight:normal;letter-spacing:0.3px;transform:scaleX(0.8403);transform-origin:left center;">Carrer Gratitud</div>
<div class="t" style="left:739.00px;top:357.94px;font-size:8.748px;color:#5f6368;font-weight:normal;letter-spacing:0.3px;transform:scaleX(0.8179);transform-origin:left center;">AVE BCN MADRID de 28/04/...</div>
<div class="t" style="right:67.20px;top:357.94px;font-size:8.748px;color:#5f6368;font-weight:normal;letter-spacing:0.3px;transform:scaleX(0.8629);transform-origin:right center;">-120,00 €</div>
<div class="r" style="left:961.80px;top:357.50px;width:30.90px;height:11.60px;border:1px solid #e3e6e9;border-radius:2px;box-sizing:border-box;background:#fff"></div>
<div class="t" style="left:777.20px;width:400px;text-align:center;top:358.92px;font-size:8.856px;color:#4e7a57;font-weight:normal;letter-spacing:0.3px;transform:scaleX(0.7622);transform-origin:center center;">VEURE</div>
<div class="r" style="left:317.00px;top:393.30px;width:697.00px;height:1.00px;background:#eceef0"></div>
<div class="t" style="left:326.70px;top:378.44px;font-size:8.748px;color:#5f6368;font-weight:normal;letter-spacing:0.3px;transform:scaleX(0.8914);transform-origin:left center;">28/04/2025</div>
<div class="t" style="left:373.60px;top:378.44px;font-size:8.748px;color:#5f6368;font-weight:normal;letter-spacing:0.3px;transform:scaleX(0.8663);transform-origin:left center;">FACTU/2025/04/0001 (Comi...</div>
<div class="t" style="left:570.00px;top:378.44px;font-size:8.748px;color:#5f6368;font-weight:normal;letter-spacing:0.3px;transform:scaleX(0.8620);transform-origin:left center;">410000 Acreedores por pre...</div>
<div class="t" style="left:681.30px;top:378.44px;font-size:8.748px;color:#5f6368;font-weight:normal;letter-spacing:0.3px;transform:scaleX(0.8403);transform-origin:left center;">Carrer Gratitud</div>
<div class="t" style="left:739.00px;top:378.44px;font-size:8.748px;color:#5f6368;font-weight:normal;letter-spacing:0.3px;transform:scaleX(0.8513);transform-origin:left center;">Comida cliente Z de 28/04/2...</div>
<div class="t" style="right:67.20px;top:378.44px;font-size:8.748px;color:#5f6368;font-weight:normal;letter-spacing:0.3px;transform:scaleX(0.8615);transform-origin:right center;">-20,00 €</div>
<div class="r" style="left:961.80px;top:378.00px;width:30.90px;height:11.60px;border:1px solid #e3e6e9;border-radius:2px;box-sizing:border-box;background:#fff"></div>
<div class="t" style="left:777.20px;width:400px;text-align:center;top:379.42px;font-size:8.856px;color:#4e7a57;font-weight:normal;letter-spacing:0.3px;transform:scaleX(0.7622);transform-origin:center center;">VEURE</div>
<div class="r" style="left:317.00px;top:413.80px;width:697.00px;height:1.00px;background:#eceef0"></div>
<div class="t" style="left:326.70px;top:398.94px;font-size:8.748px;color:#5f6368;font-weight:normal;letter-spacing:0.3px;transform:scaleX(0.8850);transform-origin:left center;">01/04/2025</div>
<div class="t" style="left:373.60px;top:398.94px;font-size:8.748px;color:#5f6368;font-weight:normal;letter-spacing:0.3px;transform:scaleX(0.8692);transform-origin:left center;">2025/0004</div>
<div class="t" style="left:484.70px;top:398.94px;font-size:8.748px;color:#5f6368;font-weight:normal;letter-spacing:0.3px;transform:scaleX(0.8850);transform-origin:left center;">01/04/2025</div>
<div class="t" style="left:570.00px;top:398.94px;font-size:8.748px;color:#5f6368;font-weight:normal;letter-spacing:0.3px;transform:scaleX(0.8660);transform-origin:left center;">440000 Deudores (euros)</div>
<div class="t" style="left:681.30px;top:398.94px;font-size:8.748px;color:#5f6368;font-weight:normal;letter-spacing:0.3px;transform:scaleX(0.8596);transform-origin:left center;">Cliente A</div>
<div class="t" style="left:739.00px;top:398.94px;font-size:8.748px;color:#5f6368;font-weight:normal;letter-spacing:0.3px;transform:scaleX(0.8692);transform-origin:left center;">2025/0004</div>
<div class="t" style="right:67.20px;top:398.94px;font-size:8.748px;color:#5f6368;font-weight:normal;letter-spacing:0.3px;transform:scaleX(0.8633);transform-origin:right center;">2.420,00 €</div>
<div class="r" style="left:961.80px;top:398.50px;width:30.90px;height:11.60px;border:1px solid #e3e6e9;border-radius:2px;box-sizing:border-box;background:#fff"></div>
<div class="t" style="left:777.20px;width:400px;text-align:center;top:399.92px;font-size:8.856px;color:#4e7a57;font-weight:normal;letter-spacing:0.3px;transform:scaleX(0.7622);transform-origin:center center;">VEURE</div>
<div class="r" style="left:1022.00px;top:22.00px;width:1.00px;height:527.00px;background:#eceef0"></div>
<div class="r" style="left:0.00px;top:0.00px;width:1.00px;height:549.00px;background:linear-gradient(#000 0px,#000 391px,#0c1540 398px,#1b2a6e 410px,#33469a 549px)"></div>
<div class="r" style="left:1.00px;top:0.00px;width:1.00px;height:549.00px;background:linear-gradient(rgba(0,0,0,0.45) 0px,rgba(0,0,0,0.45) 391px,rgba(20,35,100,0.45) 405px,rgba(60,80,160,0.4) 549px)"></div>
<div class="r" style="left:323.20px;top:33.60px;width:31px;height:31px;border-radius:50%;background:#fd9506"></div>
<div class="t" style="left:138.70px;width:400px;text-align:center;top:39.41px;font-size:18.36px;color:#111;font-weight:normal;transform:scaleX(0.9259);transform-origin:center center;">3</div>
<div class="r" style="left:99.00px;top:467.30px;width:31px;height:31px;border-radius:50%;background:#fd9506"></div>
<div class="t" style="left:-85.50px;width:400px;text-align:center;top:473.11px;font-size:18.36px;color:#111;font-weight:normal;transform:scaleX(0.9259);transform-origin:center center;">1</div>
<div class="r" style="left:513.50px;top:284.90px;width:31px;height:31px;border-radius:50%;background:#fd9506"></div>
<div class="t" style="left:329.00px;width:400px;text-align:center;top:290.71px;font-size:18.36px;color:#111;font-weight:normal;transform:scaleX(0.9259);transform-origin:center center;">2</div>
</body></html>
